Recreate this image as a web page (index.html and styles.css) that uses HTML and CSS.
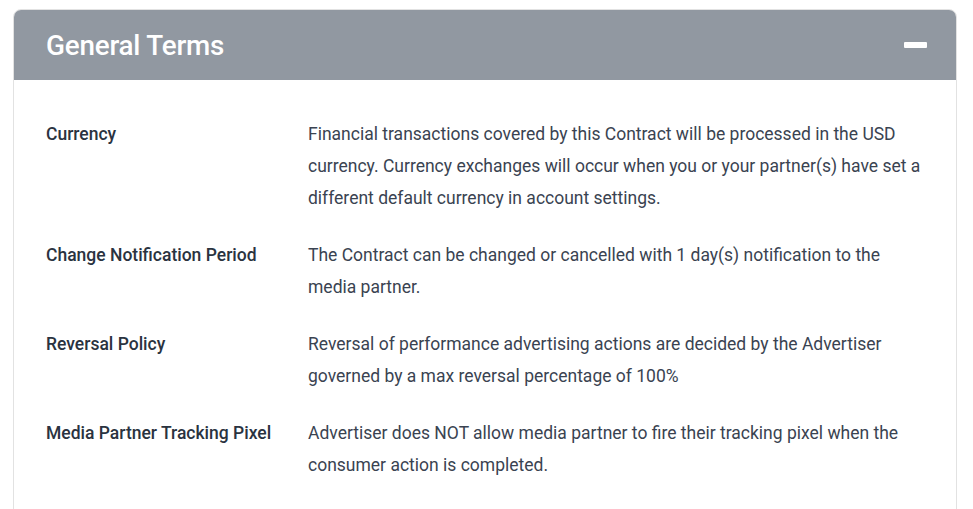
FILE: index.html
```html
<!DOCTYPE html>
<html lang="en">
<head>
<meta charset="utf-8">
<title>General Terms</title>
<link rel="stylesheet" href="styles.css">
</head>
<body>
<section class="card">
  <header class="card-header">
    <h2 class="card-title">General Terms</h2>
    <button class="collapse-btn" aria-label="Collapse"><span class="minus"></span></button>
  </header>
  <div class="card-body">
    <dl class="terms">
      <div class="term">
        <dt class="term-label">Currency</dt>
        <dd class="term-value">Financial transactions covered by this Contract will be processed in the USD currency. Currency exchanges will occur when you or your partner(s) have set a different default currency in account settings.</dd>
      </div>
      <div class="term">
        <dt class="term-label">Change Notification Period</dt>
        <dd class="term-value">The Contract can be changed or cancelled with 1 day(s) notification to the media partner.</dd>
      </div>
      <div class="term">
        <dt class="term-label">Reversal Policy</dt>
        <dd class="term-value">Reversal of performance advertising actions are decided by the Advertiser governed by a max reversal percentage of 100%</dd>
      </div>
      <div class="term">
        <dt class="term-label">Media Partner Tracking Pixel</dt>
        <dd class="term-value">Advertiser does NOT allow media partner to fire their tracking pixel when the consumer action is completed.</dd>
      </div>
    </dl>
  </div>
</section>
</body>
</html>
```
FILE: styles.css
```css
* { box-sizing: border-box; }
html, body { margin: 0; padding: 0; background: #ffffff; }
body {
  padding: 9px 16px 0 13px;
  font-family: Roboto, "Liberation Sans", sans-serif;
}
.card {
  width: 944px;
  border: 1px solid #e2e2e2;
  border-radius: 8px;
  overflow: hidden;
  background: #fff;
}
.card-header {
  height: 70px;
  background: #9198a1;
  display: flex;
  align-items: center;
  justify-content: space-between;
  padding: 0 29px 0 32px;
}
.card-title {
  margin: 0;
  color: #ffffff;
  font-size: 27.8px;
  font-weight: 500;
  letter-spacing: -0.2px;
}
.collapse-btn {
  border: 0;
  background: transparent;
  padding: 0;
  width: 23px;
  height: 6px;
  display: flex;
  cursor: pointer;
}
.minus {
  display: block;
  width: 23px;
  height: 6px;
  background: #ffffff;
  border-radius: 1px;
}
.card-body {
  padding: 38px 32px 40px 32px;
}
.terms { margin: 0; display: flex; flex-direction: column; gap: 25px; }
.term { display: flex; }
.term-label {
  flex: 0 0 262px;
  margin: 0;
  font-size: 17.5px;
  line-height: 32px;
  font-weight: 500;
  color: #2a3340;
}
.term-value {
  margin: 0;
  flex: 1;
  font-size: 17.5px;
  line-height: 32px;
  color: #3a4351;
}
```
